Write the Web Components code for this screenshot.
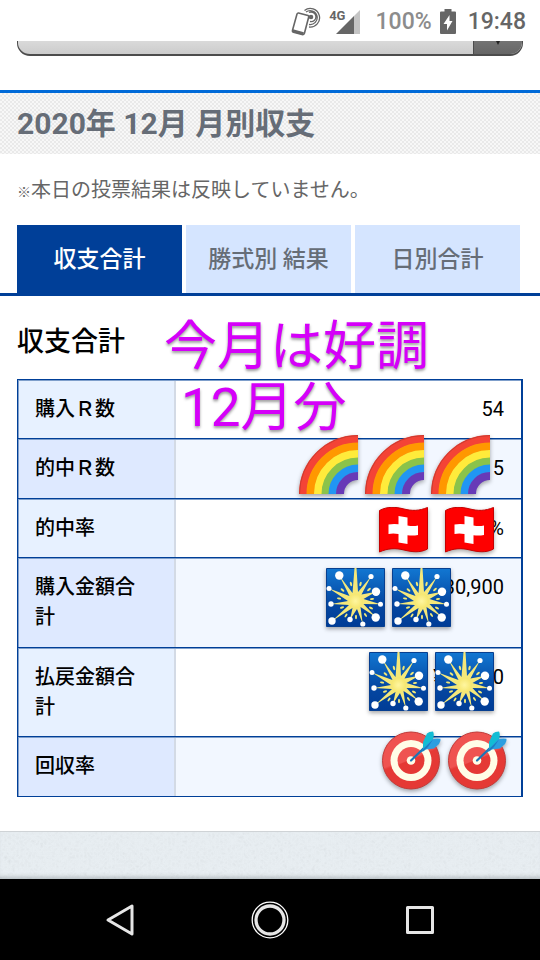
<!DOCTYPE html>
<html lang="ja">
<head>
<meta charset="utf-8">
<meta name="viewport" content="width=device-width, initial-scale=1">
<title>月別収支</title>
<style>
    body {
        margin: 0;
        background: #ffffff;
        font-family: Roboto, "Noto Sans CJK JP", sans-serif;
    }
</style>
</head>
<body>
<balance-page></balance-page>

<script>
class StatusBar extends HTMLElement
{
    constructor()
    {
        super();
        this.shadow = this.attachShadow({ mode: "open" });
    }

    connectedCallback()
    {
        this.shadow.innerHTML = `
            <style>
                :host {
                    display: flex;
                    align-items: center;
                    justify-content: flex-end;
                    height: 39px;
                    padding: 2px 14px 0 0;
                    background: #ffffff;
                    color: #666666;
                    font-size: 23px;
                    font-weight: 500;
                }
                svg { display: block; }
                .level { margin: 0 8px 0 15px; color: #8c8c8c; }
                .clock { margin-left: 12px; }
                .net { font-size: 13px; font-weight: 700; margin: 0 0 12px 8px; }
                .signal { margin-left: -9px; }
            </style>
            <svg width="30" height="30" viewBox="0 0 30 30" fill="none" stroke="#666" stroke-width="1.6">
                <path d="M7.500 6 L17 8.500 Q18 9 17.700 10 L13.500 26 Q13 28 11 27.500 L2.500 25.200 Q1 24.700 1.500 23.200 L6 7 Q6.500 5.800 7.500 6Z"/>
                <path d="M1.600 23.600 L12.500 26.600" stroke-width="3"/>
                <circle cx="20" cy="10" r="1.500" fill="#666"/>
                <path d="M18 5.500 A4.800 4.800 0 1 1 19 14.500 M15 5 A7 7 0 1 1 18 17.500 M13.500 3.500 A9.300 9.300 0 1 1 18 20" stroke-width="1.300"/>
            </svg>
            <span class="net">4G</span>
            <svg class="signal" width="24" height="24" viewBox="0 0 24 24">
                <path d="M18 6 L24 0 V24 H18Z" fill="#c4c4c4"/>
                <path d="M0 24 L18 6 V24Z" fill="#666"/>
            </svg>
            <span class="level">100%</span>
            <svg width="16" height="25" viewBox="0 0 16 25">
                <path d="M4.500 0 H11.500 V2.500 H15 Q16 2.500 16 3.500 V24 Q16 25 15 25 H1 Q0 25 0 24 V3.500 Q0 2.500 1 2.500 H4.500Z" fill="#666"/>
                <path d="M9.500 6 L3.500 15 H7 V21.500 L12.500 12 H9.500Z" fill="#fff"/>
            </svg>
            <span class="clock">19:48</span>
        `;
    }
}

class MonthPicker extends HTMLElement
{
    constructor()
    {
        super();
        this.shadow = this.attachShadow({ mode: "open" });
    }

    connectedCallback()
    {
        this.shadow.innerHTML = `
            <style>
                :host {
                    display: flex;
                    align-items: flex-end;
                    height: 15px;
                    padding: 0 17px;
                    margin-bottom: 34px;
                    overflow: hidden;
                }
                label { display: flex; flex: 1; position: relative; }
                select {
                    appearance: none;
                    flex: 1;
                    height: 52px;
                    padding: 0 70px 6px 20px;
                    border: 1px solid #4c4c4c;
                    border-bottom-width: 2px;
                    border-radius: 13px;
                    background: linear-gradient(#ffffff, #cccccc);
                    color: #666666;
                    font: 20px Roboto, "Noto Sans CJK JP", sans-serif;
                }
                .arrow {
                    position: absolute;
                    right: 1px;
                    top: 1px;
                    bottom: 2px;
                    width: 48px;
                    border-left: 1px solid #4c4c4c;
                    border-radius: 0 12px 12px 0;
                    background: linear-gradient(#999999, #666666);
                    pointer-events: none;
                }
                .arrow svg { display: block; margin: 32px auto 0; }
            </style>
            <label>
                <select aria-label="対象月"><option>2020年12月</option></select>
                <span class="arrow"><svg width="8" height="8" viewBox="0 0 8 8"><path d="M0 0 H8 L4 8Z" fill="#222"/></svg></span>
            </label>
        `;
    }
}

class PageTitle extends HTMLElement
{
    constructor()
    {
        super();
        this.shadow = this.attachShadow({ mode: "open" });
    }

    connectedCallback()
    {
        this.shadow.innerHTML = `
            <style>
                :host {
                    display: block;
                    padding: 0 17px;
                    border-top: 3px solid #006ad8;
                    background: repeating-conic-gradient(#e9e9e9 0 25%, #f7f7f7 0 50%) 0 0 / 4px 4px;
                }
                h1 {
                    margin: 0;
                    color: #666d77;
                    font-size: 30px;
                    font-weight: 700;
                    line-height: 61px;
                }
            </style>
            <h1><slot></slot></h1>
        `;
    }
}

class TabStrip extends HTMLElement
{
    constructor()
    {
        super();
        this.shadow = this.attachShadow({ mode: "open" });
    }

    connectedCallback()
    {
        this.shadow.innerHTML = `
            <style>
                :host {
                    display: block;
                    border-bottom: 3px solid #003f98;
                }
                nav {
                    display: grid;
                    grid-template-columns: repeat(3, 1fr);
                    gap: 4px;
                    padding: 0 20px 0 17px;
                }
                ::slotted(a) {
                    padding-top: 2px;
                    background: #d5e5ff;
                    color: #666d77;
                    font-size: 23px;
                    font-weight: 500;
                    line-height: 66px;
                    text-align: center;
                    text-decoration: none;
                }
                ::slotted(a[aria-current]) {
                    background: #003f98;
                    color: #ffffff;
                }
            </style>
            <nav><slot></slot></nav>
        `;
    }
}

const STICKERS = {
    rainbow: `<svg width="59" height="59" viewBox="0 0 59 59">
        <g fill="none" stroke-width="8">
            <path d="M4 59 A55 55 0 0 1 59 4" stroke="#f44336"/>
            <path d="M11.500 59 A47.500 47.500 0 0 1 59 11.500" stroke="#ff9800"/>
            <path d="M19 59 A40 40 0 0 1 59 19" stroke="#ffeb3b"/>
            <path d="M26.500 59 A32.500 32.500 0 0 1 59 26.500" stroke="#8bc34a"/>
            <path d="M33.500 59 A25.500 25.500 0 0 1 59 33.500" stroke="#2196f3"/>
            <path d="M41 59 A18 18 0 0 1 59 41" stroke="#673ab7"/>
            <path d="M0.500 59 A58.500 58.500 0 0 1 59 0.500" stroke="#c93b30" stroke-width="1"/>
        </g></svg>`,
    flag: `<svg width="49" height="46" viewBox="0 0 49 46">
        <path d="M.5 3.500 C9 -1 17 0 25 2 S40 4 48.500 .5 V42 C41 46 33 45 25 43 S9 41 .5 45Z" fill="#fe0000" stroke="#c40000"/>
        <path d="M19.500 9 L28.500 10.500 V18.500 Q34 19.500 39 18.500 V28 Q34 29 28.500 28.300 V37 L19.500 35.500 V27 Q14 26 9.500 27 V17.500 Q14 16.500 19.500 17.200Z" fill="#fff"/></svg>`,
    sparkler: `<svg width="59" height="59" viewBox="0 0 59 59">
        <defs><linearGradient id="sky" x2="0" y2="1"><stop stop-color="#1277d2"/><stop offset=".6" stop-color="#0547a1"/><stop offset="1" stop-color="#003c96"/></linearGradient>
        <radialGradient id="glow"><stop stop-color="#fff6a0"/><stop offset="1" stop-color="#f5e66e"/></radialGradient></defs>
        <path d="M.5 .5 H58.500 V58.500 H.5Z" fill="url(#sky)" stroke="#073f90"/>
        <path d="M28.500 0 H30.500 L32 24 L45 8.500 L35.500 26.500 L50 23.800 L37.500 31 L54.500 36.300 L37.500 36 L49.700 49 L34.500 39 L36.800 56 L31 41 L24 51.700 L26.500 40 L6 53 L23 37 L5 36 L22 33 L3 20.500 L23.500 28 L13.300 7.500 L26.500 25Z" fill="#f5e87a"/>
        <circle cx="29.500" cy="33" r="7.500" fill="url(#glow)"/>
        <g fill="#f0e878">
            <ellipse cx="25" cy="16" rx="1.100" ry="2.300" transform="rotate(-15 25 16)"/>
            <ellipse cx="34.500" cy="16" rx="1.100" ry="2.300" transform="rotate(15 34.500 16)"/>
            <ellipse cx="16.500" cy="22" rx="1.100" ry="2.300" transform="rotate(-48 16.500 22)"/>
            <ellipse cx="43" cy="21.500" rx="1.100" ry="2.300" transform="rotate(48 43 21.500)"/>
            <ellipse cx="13" cy="30.500" rx="1" ry="2.200" transform="rotate(-80 13 30.500)"/>
            <ellipse cx="46" cy="31" rx="1" ry="2.200" transform="rotate(85 46 31)"/>
            <ellipse cx="16" cy="39.500" rx="1" ry="2.200" transform="rotate(68 16 39.500)"/>
            <ellipse cx="45" cy="40" rx="1" ry="2.200" transform="rotate(-64 45 40)"/>
            <ellipse cx="20" cy="47.500" rx="1" ry="2.200" transform="rotate(35 20 47.500)"/>
            <ellipse cx="30" cy="49" rx="1" ry="2.200"/>
            <ellipse cx="39.500" cy="47" rx="1" ry="2.200" transform="rotate(-35 39.500 47)"/>
        </g>
        <g fill="#fff">
            <circle cx="13.300" cy="7.500" r="4.200"/><circle cx="45" cy="8.500" r="2.600"/>
            <circle cx="3" cy="20.500" r="2.500"/><circle cx="50" cy="23.800" r="4.200"/>
            <circle cx="5" cy="36" r="2.700"/><circle cx="54.500" cy="36.300" r="2.500"/>
            <circle cx="6" cy="53" r="3.700"/><circle cx="49.700" cy="49.500" r="4.200"/>
            <circle cx="24" cy="51.500" r="2.700"/><circle cx="36.800" cy="56" r="2.600"/>
        </g></svg>`,
    target: `<svg width="59" height="59" viewBox="0 0 59 59">
        <defs><linearGradient id="red" x1=".2" y1="0" x2=".6" y2="1"><stop offset=".48" stop-color="#ef5350"/><stop offset=".52" stop-color="#e53935"/></linearGradient></defs>
        <circle cx="29" cy="29.500" r="28.500" fill="url(#red)" stroke="#c13a38"/>
        <circle cx="29" cy="29.500" r="20.500" fill="#fffde7"/>
        <circle cx="29" cy="29.500" r="13.500" fill="url(#red)"/>
        <circle cx="29" cy="29.500" r="4.300" fill="#fffde7"/>
        <path d="M29 29.500 L44 15" stroke="#1b75b5" stroke-width="2.200" stroke-linecap="round"/>
        <path d="M41 19 V11 L45 2.500 Q47 .5 51 .5 Q52.500 3 51 8.500 L44 16Z" fill="#13bcd4"/>
        <path d="M40 19 L50 8.500 Q54 7 58.500 7.800 Q59 10 57 13 L52 17.500 L40 19Z" fill="#2d9ee0"/>
        <path d="M37 22 L51 8.500 L46 16 L42 20Z" fill="#1b80c4"/></svg>`
};

class StickerRow extends HTMLElement
{
    constructor()
    {
        super();
        this.shadow = this.attachShadow({ mode: "open" });
    }

    connectedCallback()
    {
        const art = STICKERS[this.getAttribute("kind")];
        const count = Number(this.getAttribute("count"));
        this.shadow.innerHTML = `
            <style>
                :host {
                    display: flex;
                    gap: 7px;
                    filter: drop-shadow(0 2px 2px rgba(0, 0, 0, 0.35));
                }
                :host([kind="flag"]) { gap: 17px; }
                svg { display: block; }
            </style>
            ${art.repeat(count)}
        `;
    }
}

class BalanceTable extends HTMLElement
{
    constructor()
    {
        super();
        this.shadow = this.attachShadow({ mode: "open" });
    }

    connectedCallback()
    {
        this.shadow.innerHTML = `
            <style>
                :host { display: block; }
                table {
                    width: 100%;
                    table-layout: fixed;
                    border-spacing: 0;
                    border: solid #003f98;
                    border-width: 0 2px 1px 1px;
                    font-size: 20px;
                    line-height: 30px;
                    color: #000000;
                }
                th, td {
                    padding: 14px 17px;
                    border-top: 1px solid #003f98;
                    box-shadow: inset 0 1px 0 #7f9fcb;
                    vertical-align: top;
                }
                th {
                    width: 117px;
                    padding-right: 24px;
                    background: #e7f1ff;
                    box-shadow: inset 1px 1px 0 #7f9fcb, inset -2px 0 0 #d3dae5;
                    font-weight: 500;
                    text-align: left;
                }
                td {
                    position: relative;
                    text-align: right;
                }
                tr:nth-child(even) > * { padding-bottom: 15px; }
                tr:nth-child(even) th { background: #dee9ff; }
                tr:nth-child(even) td { background: #f2f7ff; }
                sticker-row { position: absolute; z-index: 1; }
                .hits { right: 31px; top: -4px; }
                .rate { right: 27px; top: 8px; }
                .spent { right: 70px; top: 10px; }
                .paid { right: 27px; top: 4px; }
                .back { right: 14px; top: -6px; }
            </style>
            <table>
                <tbody>
                    <tr><th scope="row">購入&#xFF32;数</th><td>54</td></tr>
                    <tr><th scope="row">的中&#xFF32;数</th><td>5<sticker-row class="hits" kind="rainbow" count="3"></sticker-row></td></tr>
                    <tr><th scope="row">的中率</th><td>%<sticker-row class="rate" kind="flag" count="2"></sticker-row></td></tr>
                    <tr><th scope="row">購入金額合計</th><td>¥30,900<sticker-row class="spent" kind="sparkler" count="2"></sticker-row></td></tr>
                    <tr><th scope="row">払戻金額合計</th><td>¥30,900<sticker-row class="paid" kind="sparkler" count="2"></sticker-row></td></tr>
                    <tr><th scope="row">回収率</th><td><sticker-row class="back" kind="target" count="2"></sticker-row></td></tr>
                </tbody>
            </table>
        `;
    }
}

class HandNote extends HTMLElement
{
    constructor()
    {
        super();
        this.shadow = this.attachShadow({ mode: "open" });
    }

    connectedCallback()
    {
        this.shadow.innerHTML = `
            <style>
                :host {
                    display: block;
                    color: #d500f9;
                    font-size: 53px;
                    line-height: 62px;
                    white-space: nowrap;
                    text-shadow: 0 2px 3px rgba(0, 0, 0, 0.4);
                }
            </style>
            <slot></slot>
        `;
    }
}

class SystemNav extends HTMLElement
{
    constructor()
    {
        super();
        this.shadow = this.attachShadow({ mode: "open" });
    }

    connectedCallback()
    {
        this.shadow.innerHTML = `
            <style>
                :host {
                    display: flex;
                    justify-content: center;
                    align-items: center;
                    gap: 110px;
                    height: 81px;
                    background: #000000;
                }
                button {
                    display: block;
                    padding: 0;
                    border: 0;
                    background: none;
                }
                svg { display: block; }
            </style>
            <button aria-label="戻る"><svg width="40" height="40" viewBox="0 0 40 40" fill="none" stroke="#e6e6e6" stroke-width="3" stroke-linejoin="round"><path d="M32 6 V34 L8 20Z"/></svg></button>
            <button aria-label="ホーム"><svg width="40" height="40" viewBox="0 0 40 40" fill="none"><circle cx="20" cy="20" r="17.800" stroke="#fff" stroke-width="1.300"/><circle cx="20" cy="20" r="14" stroke="#e6e6e6" stroke-width="3.300"/></svg></button>
            <button aria-label="履歴"><svg width="40" height="40" viewBox="0 0 40 40" fill="none" stroke="#e6e6e6" stroke-width="3" stroke-linejoin="round"><path d="M7.500 7.500 H32.500 V32.500 H7.500Z"/></svg></button>
        `;
    }
}

class BalancePage extends HTMLElement
{
    constructor()
    {
        super();
        this.shadow = this.attachShadow({ mode: "open" });
    }

    connectedCallback()
    {
        this.shadow.innerHTML = `
            <style>
                :host {
                    display: flex;
                    flex-direction: column;
                    min-height: 100vh;
                }
                .note {
                    margin: 0;
                    padding: 2px 17px 0;
                    color: #666666;
                    font-size: 20px;
                    line-height: 69px;
                }
                .mark { font-size: 14px; line-height: 1; }
                main {
                    position: relative;
                    padding: 26px 17px 34px;
                    border-bottom: 1px solid #cfd3d6;
                }
                h2 {
                    margin: 0 0 17px;
                    font-size: 27px;
                    font-weight: 500;
                    line-height: 40px;
                }
                hand-note { position: absolute; z-index: 2; }
                .first { left: 164px; top: 20px; }
                .second { left: 181px; top: 81px; }
                .ground {
                    position: relative;
                    flex: 1;
                    min-height: 40px;
                    background: #e8eef2;
                    box-shadow: inset 0 -5px 4px -3px #b4bcc0;
                }
                .ground svg {
                    position: absolute;
                    width: 100%;
                    height: 100%;
                    opacity: 0.09;
                }
            </style>
            <status-bar></status-bar>
            <month-picker></month-picker>
            <page-title>2020年 12月 月別収支</page-title>
            <p class="note"><span class="mark">※</span>本日の投票結果は反映していません。</p>
            <tab-strip>
                <a href="#total" aria-current="page">収支合計</a>
                <a href="#type">勝式別 結果</a>
                <a href="#daily">日別合計</a>
            </tab-strip>
            <main>
                <h2>収支合計</h2>
                <balance-table></balance-table>
                <hand-note class="first">今月は好調</hand-note>
                <hand-note class="second">12月分</hand-note>
            </main>
            <div class="ground">
                <svg aria-hidden="true"><filter id="grain"><feTurbulence baseFrequency="0.25" numOctaves="2"/><feColorMatrix type="saturate" values="0"/></filter><rect width="100%" height="100%" filter="url(#grain)"/></svg>
            </div>
            <system-nav></system-nav>
        `;
    }
}

customElements.define("status-bar", StatusBar);
customElements.define("month-picker", MonthPicker);
customElements.define("page-title", PageTitle);
customElements.define("tab-strip", TabStrip);
customElements.define("sticker-row", StickerRow);
customElements.define("balance-table", BalanceTable);
customElements.define("hand-note", HandNote);
customElements.define("system-nav", SystemNav);
customElements.define("balance-page", BalancePage);
</script>
</body>
</html>
